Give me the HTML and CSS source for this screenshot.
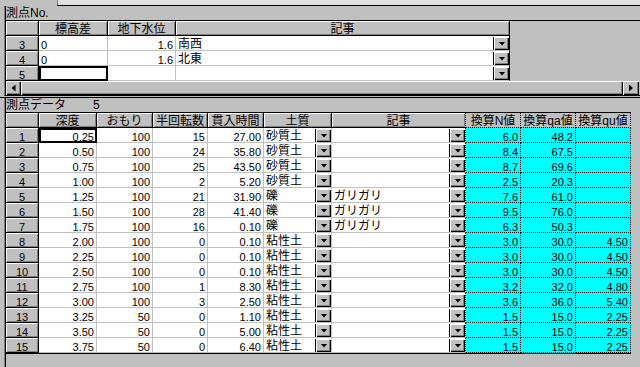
FILE: index.html
```html
<!DOCTYPE html>
<html lang="ja">
<head>
    <meta charset="UTF-8">
    <title>測点データ</title>
    <link rel="stylesheet" href="styles.css">
</head>
<body>
    <div class="strip"><div class="strip-ctl"></div></div>

    <!-- 測点No. -->
    <div class="panel top">
        <div class="caption">測点No.</div>
        <div class="grid g1">
            <div class="r"><div class="fx"></div><div class="fx">標高差</div><div class="fx">地下水位</div><div class="fx last">記事</div></div>
            <div class="r"><div class="fx rh">3</div><div class="v">0</div><div class="v n">1.6</div><div class="dd last">南西<i></i></div></div>
            <div class="r"><div class="fx rh">4</div><div class="v">0</div><div class="v n">1.6</div><div class="dd last">北東<i></i></div></div>
            <div class="r"><div class="fx rh">5</div><div class="v sel"></div><div class="v n"></div><div class="dd last"><i></i></div></div>
        </div>
        <div class="hscroll">
            <div class="sb left"><b></b></div>
            <div class="thumb"></div>
            <div class="sb right"><b></b></div>
        </div>
    </div>

    <div class="sep"></div>

    <!-- 測点データ -->
    <div class="panel bot">
        <div class="caption">測点データ<span class="count">5</span></div>
        <div class="grid g2">
            <div class="r"><div class="fx"></div><div class="fx">深度</div><div class="fx">おもり</div><div class="fx">半回転数</div><div class="fx">貫入時間</div><div class="fx">土質</div><div class="fx memo-h">記事</div><div class="fx cyh">換算N値</div><div class="fx cyh">換算qa値</div><div class="fx cyh">換算qu値</div></div>
            <div class="r"><div class="fx rh">1</div><div class="v n sel">0.25</div><div class="v n">100</div><div class="v n">15</div><div class="v n">27.00</div><div class="dd">砂質土<i></i></div><div class="dd memo"><i></i></div><div class="v n cy">6.0</div><div class="v n cy">48.2</div><div class="v n cy"></div></div>
            <div class="r"><div class="fx rh">2</div><div class="v n">0.50</div><div class="v n">100</div><div class="v n">24</div><div class="v n">35.80</div><div class="dd">砂質土<i></i></div><div class="dd memo"><i></i></div><div class="v n cy">8.4</div><div class="v n cy">67.5</div><div class="v n cy"></div></div>
            <div class="r"><div class="fx rh">3</div><div class="v n">0.75</div><div class="v n">100</div><div class="v n">25</div><div class="v n">43.50</div><div class="dd">砂質土<i></i></div><div class="dd memo"><i></i></div><div class="v n cy">8.7</div><div class="v n cy">69.6</div><div class="v n cy"></div></div>
            <div class="r"><div class="fx rh">4</div><div class="v n">1.00</div><div class="v n">100</div><div class="v n">2</div><div class="v n">5.20</div><div class="dd">砂質土<i></i></div><div class="dd memo"><i></i></div><div class="v n cy">2.5</div><div class="v n cy">20.3</div><div class="v n cy"></div></div>
            <div class="r"><div class="fx rh">5</div><div class="v n">1.25</div><div class="v n">100</div><div class="v n">21</div><div class="v n">31.90</div><div class="dd">礫<i></i></div><div class="dd memo">ガリガリ<i></i></div><div class="v n cy">7.6</div><div class="v n cy">61.0</div><div class="v n cy"></div></div>
            <div class="r"><div class="fx rh">6</div><div class="v n">1.50</div><div class="v n">100</div><div class="v n">28</div><div class="v n">41.40</div><div class="dd">礫<i></i></div><div class="dd memo">ガリガリ<i></i></div><div class="v n cy">9.5</div><div class="v n cy">76.0</div><div class="v n cy"></div></div>
            <div class="r"><div class="fx rh">7</div><div class="v n">1.75</div><div class="v n">100</div><div class="v n">16</div><div class="v n">0.10</div><div class="dd">礫<i></i></div><div class="dd memo">ガリガリ<i></i></div><div class="v n cy">6.3</div><div class="v n cy">50.3</div><div class="v n cy"></div></div>
            <div class="r"><div class="fx rh">8</div><div class="v n">2.00</div><div class="v n">100</div><div class="v n">0</div><div class="v n">0.10</div><div class="dd">粘性土<i></i></div><div class="dd memo"><i></i></div><div class="v n cy">3.0</div><div class="v n cy">30.0</div><div class="v n cy">4.50</div></div>
            <div class="r"><div class="fx rh">9</div><div class="v n">2.25</div><div class="v n">100</div><div class="v n">0</div><div class="v n">0.10</div><div class="dd">粘性土<i></i></div><div class="dd memo"><i></i></div><div class="v n cy">3.0</div><div class="v n cy">30.0</div><div class="v n cy">4.50</div></div>
            <div class="r"><div class="fx rh">10</div><div class="v n">2.50</div><div class="v n">100</div><div class="v n">0</div><div class="v n">0.10</div><div class="dd">粘性土<i></i></div><div class="dd memo"><i></i></div><div class="v n cy">3.0</div><div class="v n cy">30.0</div><div class="v n cy">4.50</div></div>
            <div class="r"><div class="fx rh">11</div><div class="v n">2.75</div><div class="v n">100</div><div class="v n">1</div><div class="v n">8.30</div><div class="dd">粘性土<i></i></div><div class="dd memo"><i></i></div><div class="v n cy">3.2</div><div class="v n cy">32.0</div><div class="v n cy">4.80</div></div>
            <div class="r"><div class="fx rh">12</div><div class="v n">3.00</div><div class="v n">100</div><div class="v n">3</div><div class="v n">2.50</div><div class="dd">粘性土<i></i></div><div class="dd memo"><i></i></div><div class="v n cy">3.6</div><div class="v n cy">36.0</div><div class="v n cy">5.40</div></div>
            <div class="r"><div class="fx rh">13</div><div class="v n">3.25</div><div class="v n">50</div><div class="v n">0</div><div class="v n">1.10</div><div class="dd">粘性土<i></i></div><div class="dd memo"><i></i></div><div class="v n cy">1.5</div><div class="v n cy">15.0</div><div class="v n cy">2.25</div></div>
            <div class="r"><div class="fx rh">14</div><div class="v n">3.50</div><div class="v n">50</div><div class="v n">0</div><div class="v n">5.00</div><div class="dd">粘性土<i></i></div><div class="dd memo"><i></i></div><div class="v n cy">1.5</div><div class="v n cy">15.0</div><div class="v n cy">2.25</div></div>
            <div class="r"><div class="fx rh">15</div><div class="v n">3.75</div><div class="v n">50</div><div class="v n">0</div><div class="v n">6.40</div><div class="dd">粘性土<i></i></div><div class="dd memo"><i></i></div><div class="v n cy">1.5</div><div class="v n cy">15.0</div><div class="v n cy">2.25</div></div>
        </div>
    </div>
</body>
</html>
```

FILE: styles.css
```css
body {
    margin: 0;
    background-color: #c0c0c0;
    color: #000;
    font-family: "Liberation Sans", "Noto Sans CJK JP", sans-serif;
    font-size: 12px;
    overflow: hidden;
    }

/* strip of the control above */
.strip {
    height: 6px;
    padding-left: 57px;
}
.strip-ctl {
    height: 5px;
    background-color: #e2e2e2;
    border-left: 1px solid #808080;
    border-bottom: 1px solid #000;
}

.panel {
    margin-left: 4px;
    padding-left: 1px;
    border-left: 1px solid #808080;
    box-shadow: inset 1px 0 #000;
}
.panel.top {
    border-bottom: 1px solid #000;
    margin-bottom: 1px;
}
.panel.bot {
    height: 269px;
}
.sep {
    height: 1px;
    background-color: #000;
}
.caption {
    height: 14px;
    line-height: 14px;
    white-space: nowrap;
}
.caption .count {
    margin-left: 27px;
}

/* grids */
.grid {
    border-top: 1px solid #000;
}
.g2 {
    width: 625px;
    border-bottom: 1px solid #000;
}
.r {
    display: grid;
    height: 15px;
}
.g1 .r {
    grid-template-columns: 33px 69px 68px 334px;
}
.g2 .r {
    grid-template-columns: 33px 58px 56px 55px 56px 68px 134px 55px 55px 55px;
}
.r > div {
    box-sizing: border-box;
    background-color: #fff;
    border-right: 1px solid #c0c0c0;
    border-bottom: 1px solid #c0c0c0;
    padding: 0 2px;
    line-height: 14px;
    white-space: nowrap;
    overflow: hidden;
}
.r > .fx {
    background-color: #c0c0c0;
    border-right-color: #000;
    border-bottom-color: #000;
    box-shadow: inset 1px 1px #fff, inset -1px -1px #808080;
    padding: 2px 0 0;
    line-height: 12px;
    text-align: center;
}
.r > .v,
.r > .rh {
    font-size: 11px;
    padding-top: 2px;
    line-height: 14px;
}
.r > .n {
    text-align: right;
}
.r > .last {
    border-right-color: #000;
}
.r > .sel {
    outline: 2px solid #000;
    outline-offset: -2px;
}

/* dropdown cells */
.r > .dd {
    display: flex;
    padding-top: 2px;
    padding-right: 0;
    line-height: 12px;
}
.dd i {
    flex: none;
    margin-left: auto;
    margin-top: -1px;
    width: 16px;
    height: 13px;
    box-sizing: border-box;
    background-color: #c0c0c0;
    border-left: 1px solid #000;
    box-shadow: inset 1px 1px #fff, inset -1px -1px #000, inset -2px -2px #808080;
    display: flex;
    align-items: center;
    justify-content: center;
}
.dd i::after {
    content: "";
    width: 7px;
    height: 4px;
    margin-left: 1px;
    background-color: #000;
    clip-path: polygon(0 0, 100% 0, 50% 100%);
}

/* computed columns */
.r > .memo,
.r > .memo-h {
    border-right: 1px dotted #000;
}
.r > .cy {
    background-color: #00ffff;
    border-right: 1px dotted #000;
    border-bottom: 1px dotted #000;
}
.r > .cyh {
    border-right: 1px dotted #000;
    border-bottom: 1px dotted #000;
    box-shadow: none;
}

/* horizontal scroll bar */
.hscroll {
    display: flex;
    width: 633px;
    height: 14px;
}
.sb, .thumb {
    box-sizing: border-box;
    background-color: #c0c0c0;
    box-shadow: inset 1px 1px #fff, inset -1px -1px #000, inset -2px -2px #808080;
}
.sb {
    width: 15px;
    display: flex;
    align-items: center;
    justify-content: center;
}
.sb.right {
    width: 16px;
}
.thumb {
    flex: 1;
}
.sb b {
    width: 4px;
    height: 7px;
    background-color: #000;
}
.sb.left b {
    clip-path: polygon(100% 0, 0 50%, 100% 100%);
}
.sb.right b {
    clip-path: polygon(0 0, 100% 50%, 0 100%);
}
```
